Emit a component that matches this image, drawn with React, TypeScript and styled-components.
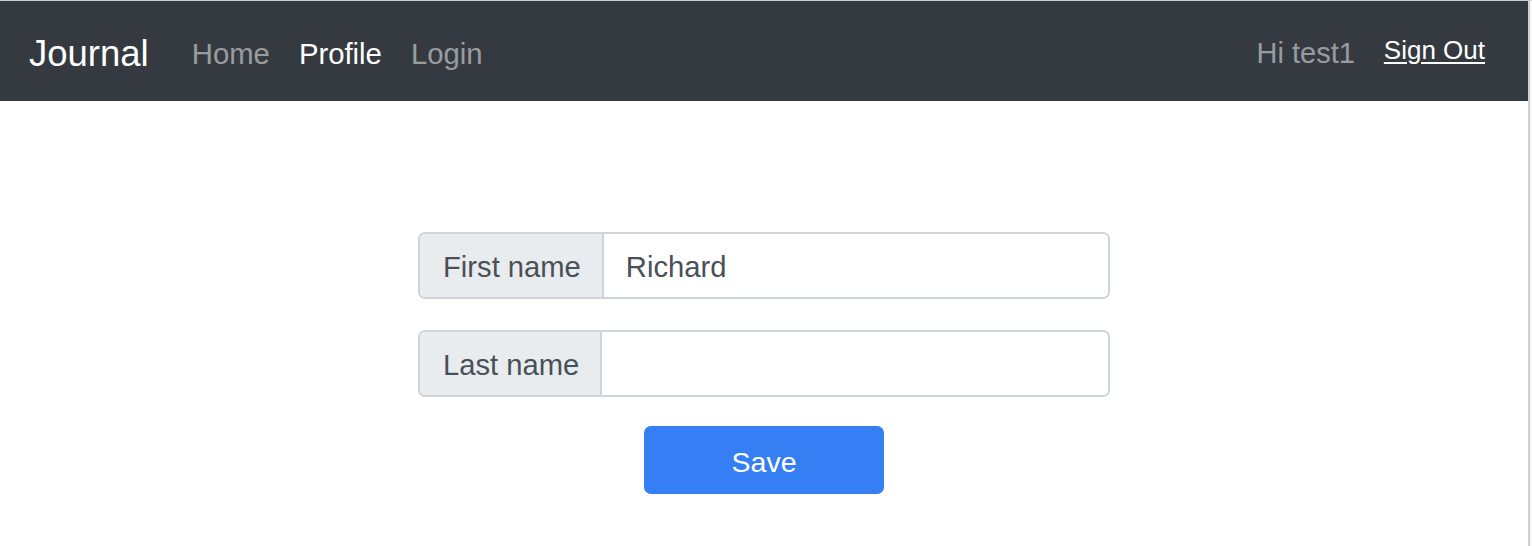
import React from "react";
import styled, { createGlobalStyle } from "styled-components";

const Global = createGlobalStyle`
  html, body { margin: 0; padding: 0; background: #ffffff; }
  body { font-family: "Liberation Sans", Arial, Helvetica, sans-serif; overflow: hidden; }
  * { box-sizing: border-box; }
`;

const Page = styled.div`
  display: flex;
  width: 1532px;
  height: 546px;
  border-top: 1px solid #cfcfcf;
`;

const Main = styled.div`
  width: 1528px;
  display: flex;
  flex-direction: column;
`;

const Divider = styled.div`
  width: 2px;
  background: #d0d0d0;
`;

const Edge = styled.div`
  width: 2px;
  background: #f7f7f7;
`;

const Navbar = styled.nav`
  height: 100px;
  background: #343a40;
  display: flex;
  align-items: center;
  padding: 5px 43px 0 29px;
`;

const Brand = styled.a`
  font-size: 36.5px;
  color: #ffffff;
  text-decoration: none;
  margin-right: 43px;
  margin-top: 1px;
`;

const NavList = styled.div`
  display: flex;
  align-items: center;
  gap: 29px;
  flex: 1;
`;

const NavLink = styled.a<{ $active?: boolean }>`
  font-size: 29.3px;
  color: ${(p) => (p.$active ? "#ffffff" : "rgba(255,255,255,0.5)")};
  text-decoration: none;
`;

const UserArea = styled.div`
  display: flex;
  align-items: center;
  gap: 29px;
`;

const Greeting = styled.span`
  font-size: 29px;
  color: rgba(255, 255, 255, 0.5);
`;

const SignOut = styled.a`
  font-size: 26px;
  color: #ffffff;
  text-decoration: underline;
  text-underline-offset: 3px;
  text-decoration-thickness: 2px;
  margin-top: -6px;
`;

const Content = styled.main`
  display: flex;
  flex-direction: column;
  align-items: center;
  padding-top: 131px;
`;

const Form = styled.form`
  width: 692px;
  display: flex;
  flex-direction: column;
  align-items: center;
  gap: 31px;
`;

const InputGroup = styled.div`
  width: 100%;
  height: 67px;
  display: flex;
  border: 2px solid #ced4da;
  border-radius: 7px;
  overflow: hidden;
`;

const GroupLabel = styled.label`
  display: flex;
  align-items: center;
  padding: 4px 21px 0 23px;
  background: #e9ecef;
  border-right: 2px solid #ced4da;
  color: #495057;
  font-size: 29.2px;
  white-space: nowrap;
`;

const TextInput = styled.input`
  flex: 1;
  border: none;
  outline: none;
  padding: 4px 22px 0;
  font-family: inherit;
  font-size: 29.2px;
  color: #495057;
  background: #ffffff;
`;

const SaveButton = styled.button`
  margin-top: -2px;
  width: 240px;
  height: 68px;
  padding-top: 5px;
  border: none;
  border-radius: 7px;
  background: #367ef3;
  color: #ffffff;
  font-family: inherit;
  font-size: 28.5px;
  cursor: pointer;
`;

export default function App() {
  return (
    <>
      <Global />
      <Page>
        <Main>
          <Navbar>
            <Brand href="#">Journal</Brand>
            <NavList>
              <NavLink href="#">Home</NavLink>
              <NavLink href="#" $active>
                Profile
              </NavLink>
              <NavLink href="#">Login</NavLink>
            </NavList>
            <UserArea>
              <Greeting>Hi test1</Greeting>
              <SignOut href="#">Sign Out</SignOut>
            </UserArea>
          </Navbar>
          <Content>
            <Form onSubmit={(e) => e.preventDefault()}>
              <InputGroup>
                <GroupLabel>First name</GroupLabel>
                <TextInput defaultValue="Richard" />
              </InputGroup>
              <InputGroup>
                <GroupLabel>Last name</GroupLabel>
                <TextInput defaultValue="" />
              </InputGroup>
              <SaveButton type="submit">Save</SaveButton>
            </Form>
          </Content>
        </Main>
        <Divider />
        <Edge />
      </Page>
    </>
  );
}
